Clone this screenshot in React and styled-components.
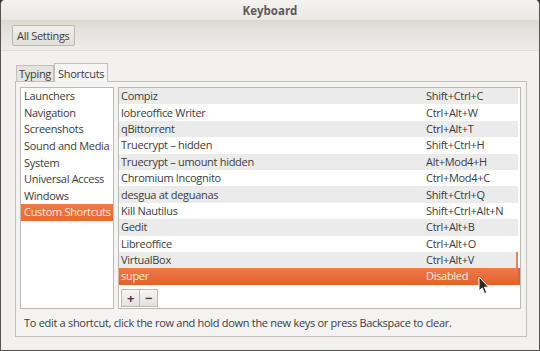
import styled, { createGlobalStyle } from "styled-components";

const GlobalStyle = createGlobalStyle`
  html, body {
    margin: 0;
    padding: 0;
    background: #3c3b37;
  }
  * { box-sizing: border-box; }
`;

const sections = [
  "Launchers",
  "Navigation",
  "Screenshots",
  "Sound and Media",
  "System",
  "Universal Access",
  "Windows",
  "Custom Shortcuts",
];

const shortcuts = [
  ["Compiz", "Shift+Ctrl+C"],
  ["lobreoffice Writer", "Ctrl+Alt+W"],
  ["qBittorrent", "Ctrl+Alt+T"],
  ["Truecrypt – hidden", "Shift+Ctrl+H"],
  ["Truecrypt – umount hidden", "Alt+Mod4+H"],
  ["Chromium Incognito", "Ctrl+Mod4+C"],
  ["desgua at deguanas", "Shift+Ctrl+Q"],
  ["Kill Nautilus", "Shift+Ctrl+Alt+N"],
  ["Gedit", "Ctrl+Alt+B"],
  ["Libreoffice", "Ctrl+Alt+O"],
  ["VirtualBox", "Ctrl+Alt+V"],
  ["super", "Disabled"],
];

export default function App() {
  return (
    <>
      <GlobalStyle />
      <Window>
        <TitleBar>Keyboard</TitleBar>
        <Toolbar>
          <ToolButton>All Settings</ToolButton>
        </Toolbar>
        <Content>
          <Tabs>
            <Tab>Typing</Tab>
            <Tab $active>Shortcuts</Tab>
          </Tabs>
          <Notebook>
            <Panes>
              <SideList>
                {sections.map((s) => (
                  <SideItem key={s} $selected={s === "Custom Shortcuts"}>{s}</SideItem>
                ))}
              </SideList>
              <ShortcutBox>
                {shortcuts.map(([name, accel], i) => (
                  <Row key={name} $odd={i % 2 === 1} $selected={i === shortcuts.length - 1} $focus={i === shortcuts.length - 2}>
                    <Name>{name}</Name>
                    <Accel>{accel}</Accel>
                    {i === shortcuts.length - 1 && (
                      <Cursor width="12" height="19" viewBox="0 0 12 19">
                        <path d="M1 1 L1 15 L4.2 12 L6.6 17.6 L8.8 16.6 L6.5 11.2 L10.8 11.2 Z" fill="#2b2b2b" stroke="#ffffff" strokeWidth="1" strokeLinejoin="round" />
                      </Cursor>
                    )}
                  </Row>
                ))}
                <EditBar>
                  <SmallButton>+</SmallButton>
                  <SmallButton>−</SmallButton>
                </EditBar>
              </ShortcutBox>
            </Panes>
            <Hint>To edit a shortcut, click the row and hold down the new keys or press Backspace to clear.</Hint>
          </Notebook>
        </Content>
      </Window>
    </>
  );
}

const Window = styled.div`
  width: 540px;
  height: 351px;
  display: flex;
  flex-direction: column;
  background: #f2f1f0;
  border: 1px solid #55544f;
  border-top: none;
  border-radius: 5px 5px 0 0;
  overflow: hidden;
  font-family: "Open Sans", "Noto Sans", sans-serif;
  font-size: 11px;
  letter-spacing: -0.3px;
  color: #3c3c3c;
`;

const TitleBar = styled.div`
  height: 20px;
  display: flex;
  align-items: center;
  justify-content: center;
  background: linear-gradient(#f4f3f1, #e9e7e3);
  font-weight: 700;
  font-size: 11.5px;
  letter-spacing: 0;
  color: #5c5b57;
`;

const Toolbar = styled.div`
  height: 31px;
  display: flex;
  align-items: center;
  padding: 0 11px;
  background: linear-gradient(#dcd8d0, #e6e3de 40%, #eeece9);
  border-bottom: 1px solid #e2dfda;
`;

const ToolButton = styled.div`
  height: 21px;
  padding: 0 4px;
  display: flex;
  align-items: center;
  border: 1px solid #bdb9b1;
  border-radius: 2px;
  background: linear-gradient(#f0eeeb, #e2dfda);
  color: #3c3c3c;
`;

const Content = styled.div`
  flex: 1;
  display: flex;
  flex-direction: column;
  padding: 11px 12px 13px 14px;
`;

const Tabs = styled.div`
  display: flex;
  align-items: flex-end;
  padding-left: 1px;
  height: 19px;
`;

const Tab = styled.div`
  height: ${(p) => (p.$active ? "19px" : "16px")};
  padding: 0 ${(p) => (p.$active ? "3px" : "2px")};
  display: flex;
  align-items: center;
  background: ${(p) => (p.$active ? "#f6f5f4" : "#e6e4e0")};
  border: 1px solid #c4c0b9;
  border-bottom: none;
  margin-bottom: ${(p) => (p.$active ? "-1px" : "0")};
  position: relative;
  z-index: ${(p) => (p.$active ? 1 : 0)};
`;

const Notebook = styled.div`
  flex: 1;
  display: flex;
  flex-direction: column;
  border: 1px solid #c4c0b9;
  background: #f4f3f2;
  padding: 5px 5px 0 4px;
`;

const Panes = styled.div`
  display: flex;
  gap: 4px;
  height: 222px;
`;

const SideList = styled.div`
  width: 94px;
  background: #ffffff;
  border: 1px solid #bdb9b3;
`;

const SideItem = styled.div`
  height: 16.6px;
  display: flex;
  align-items: center;
  padding-left: 3px;
  padding-bottom: 1px;
  white-space: nowrap;
  background: ${(p) => (p.$selected ? "linear-gradient(#f07a4a, #e46a37)" : "transparent")};
  color: ${(p) => (p.$selected ? "#fde9df" : "#3c3c3c")};
`;

const ShortcutBox = styled.div`
  flex: 1;
  background: #ffffff;
  border: 1px solid #bdb9b3;
  display: flex;
  flex-direction: column;
`;

const Row = styled.div`
  height: 16.4px;
  display: flex;
  align-items: center;
  position: relative;
  padding-left: 2px;
  padding-bottom: 1px;
  white-space: nowrap;
  background: ${(p) =>
    p.$selected ? "linear-gradient(#f07a4a, #e0622f)" : p.$odd ? "#ffffff" : "#ebebeb"};
  color: ${(p) => (p.$selected ? "#fde9df" : "#3c3c3c")};
  border-right: 2px solid ${(p) => (p.$focus ? "#e8845a" : p.$selected ? "#e0622f" : "transparent")};
  margin-right: ${(p) => (p.$selected ? "0" : "2px")};
`;

const Name = styled.span`
  width: 305px;
`;

const Accel = styled.span`
  flex: 1;
`;

const Cursor = styled.svg`
  position: absolute;
  left: 359px;
  top: 8px;
`;

const EditBar = styled.div`
  display: flex;
  padding: 4px 0 0 2px;
`;

const SmallButton = styled.div`
  width: 19px;
  height: 18px;
  display: flex;
  align-items: center;
  justify-content: center;
  border: 1px solid #bdb9b1;
  background: linear-gradient(#f6f5f3, #e4e1dc);
  font-weight: 700;
  font-size: 13px;
  color: #3c3c3c;
  & + & {
    margin-left: -1px;
  }
`;

const Hint = styled.div`
  flex: 1;
  display: flex;
  align-items: center;
  padding-left: 4px;
  white-space: nowrap;
`;
